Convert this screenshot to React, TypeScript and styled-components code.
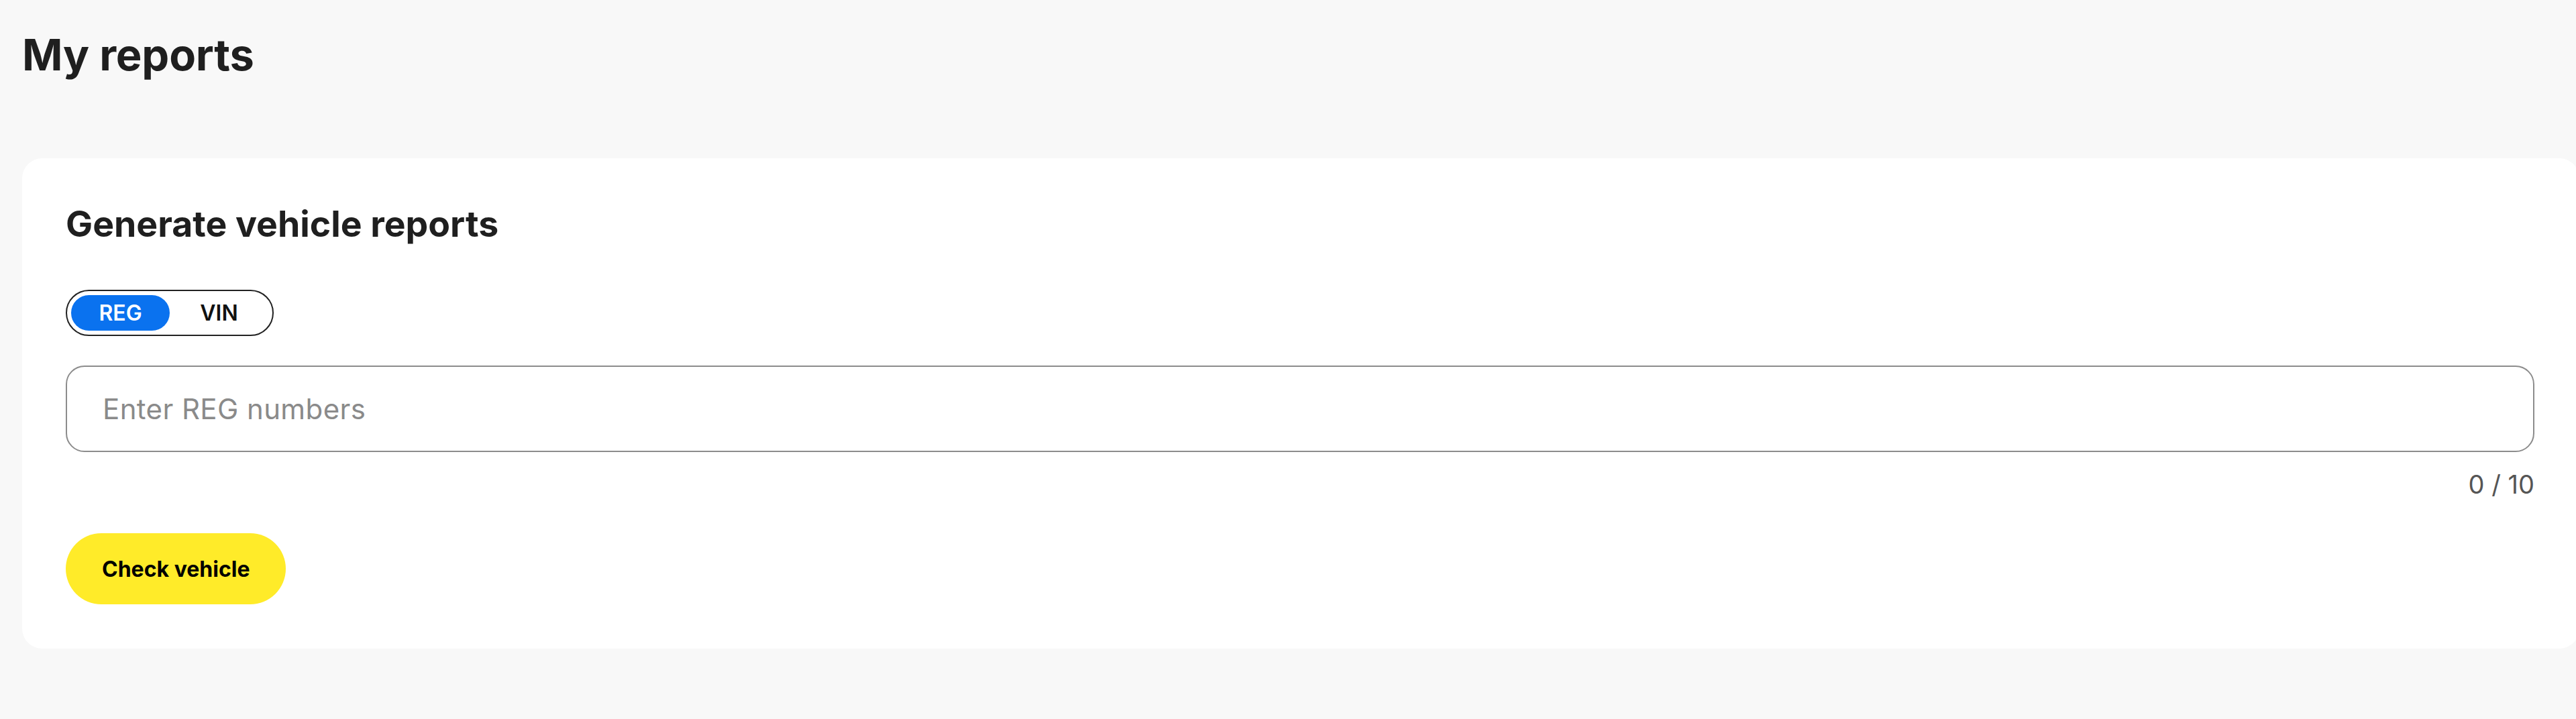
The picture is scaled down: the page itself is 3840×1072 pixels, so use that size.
import React, { useState } from "react";
import styled, { createGlobalStyle } from "styled-components";

const GlobalStyle = createGlobalStyle`
  html, body {
    margin: 0;
    padding: 0;
    background: #f8f8f8;
    overflow-x: hidden;
  }
  body {
    font-family: Inter, "Noto Sans", "Liberation Sans", sans-serif;
    color: #1f1f1f;
  }
  * { box-sizing: border-box; }
`;

const Page = styled.main`
  min-height: 1072px;
  padding: 42px 0 80px 33px;
  display: flex;
  flex-direction: column;
`;

const PageTitle = styled.h1`
  margin: 0 0 114px 0;
  font-size: 65px;
  line-height: 80px;
  font-weight: 700;
  letter-spacing: -0.2px;
  color: #1f1f1f;
`;

const Card = styled.section`
  background: #ffffff;
  border-radius: 30px;
  margin-right: -5px;
  padding: 66px 67px 66px 65px;
  display: flex;
  flex-direction: column;
`;

const CardTitle = styled.h2`
  margin: 0 0 66px 0;
  font-size: 53.5px;
  line-height: 64px;
  font-weight: 700;
  color: #1f1f1f;
`;

const Toggle = styled.div`
  display: inline-flex;
  align-self: flex-start;
  border: 2px solid #222;
  border-radius: 999px;
  padding: 6px;
  margin-bottom: 44px;
`;

const ToggleOption = styled.button<{ $active: boolean }>`
  width: 147px;
  height: 53px;
  border: none;
  border-radius: 999px;
  background: ${(p) => (p.$active ? "#0a72ef" : "transparent")};
  color: ${(p) => (p.$active ? "#ffffff" : "#111")};
  font-family: inherit;
  font-size: 32px;
  font-weight: 600;
  cursor: pointer;
  padding: 0;
`;

const Input = styled.input`
  width: 100%;
  height: 129px;
  border: 2px solid #8c8c8c;
  border-radius: 28px;
  padding: 0 53px;
  font-family: inherit;
  font-size: 42px;
  letter-spacing: 0.4px;
  color: #1f1f1f;
  outline: none;
  background: #fff;
  &::placeholder {
    color: #8a8a8a;
  }
`;

const Counter = styled.div`
  align-self: flex-end;
  margin-top: 25px;
  font-size: 38px;
  line-height: 46px;
  color: #555;
`;

const PrimaryButton = styled.button`
  align-self: flex-start;
  margin-top: 50px;
  height: 106px;
  padding: 0 54px;
  border: none;
  border-radius: 999px;
  background: #ffeb29;
  color: #000;
  font-family: inherit;
  font-size: 32px;
  font-weight: 700;
  cursor: pointer;
`;

export default function App() {
  const [mode, setMode] = useState<"REG" | "VIN">("REG");
  const [value, setValue] = useState("");
  const count = value.split(/[\s,]+/).filter(Boolean).length;

  return (
    <>
      <GlobalStyle />
      <Page>
        <PageTitle>My reports</PageTitle>
        <Card>
          <CardTitle>Generate vehicle reports</CardTitle>
          <Toggle>
            <ToggleOption $active={mode === "REG"} onClick={() => setMode("REG")}>
              REG
            </ToggleOption>
            <ToggleOption $active={mode === "VIN"} onClick={() => setMode("VIN")}>
              VIN
            </ToggleOption>
          </Toggle>
          <Input
            placeholder={`Enter ${mode} numbers`}
            value={value}
            onChange={(e) => setValue(e.target.value)}
          />
          <Counter>{count} / 10</Counter>
          <PrimaryButton>Check vehicle</PrimaryButton>
        </Card>
      </Page>
    </>
  );
}
